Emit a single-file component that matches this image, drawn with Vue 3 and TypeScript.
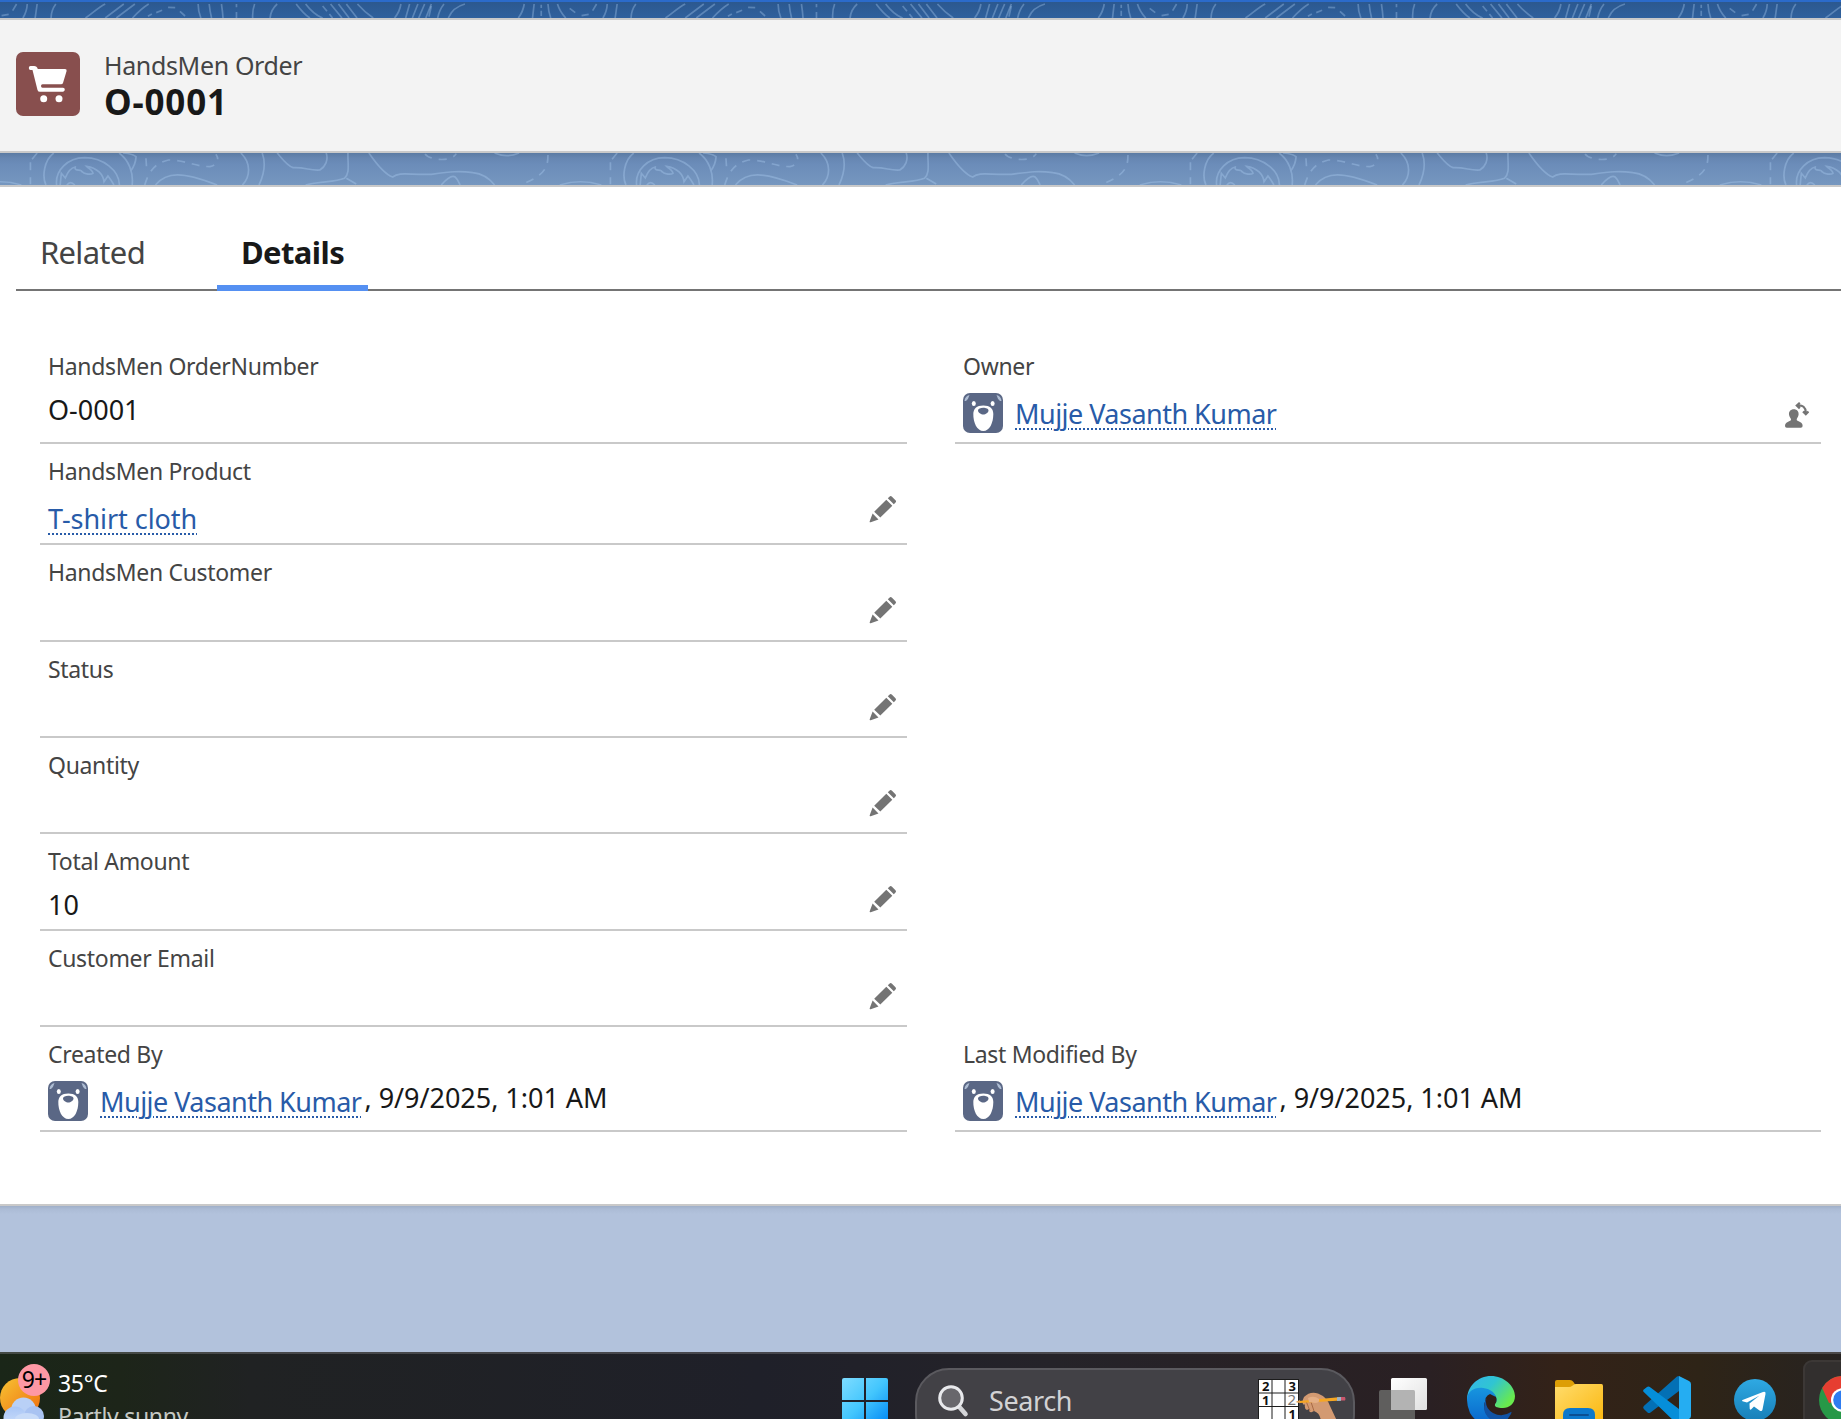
<script setup lang="ts">
interface Field {
  label: string
  value?: string
  link?: string
  avatar?: boolean
  action?: 'edit' | 'owner'
  side?: 'right'
}

const fields: Field[] = [
  { label: 'HandsMen OrderNumber', value: 'O-0001' },
  { label: 'Owner', link: 'Mujje Vasanth Kumar', avatar: true, action: 'owner', side: 'right' },
  { label: 'HandsMen Product', link: 'T-shirt cloth', action: 'edit' },
  { label: 'HandsMen Customer', action: 'edit' },
  { label: 'Status', action: 'edit' },
  { label: 'Quantity', action: 'edit' },
  { label: 'Total Amount', value: '10', action: 'edit' },
  { label: 'Customer Email', action: 'edit' },
  { label: 'Created By', link: 'Mujje Vasanth Kumar', avatar: true, value: ', 9/9/2025, 1:01 AM' },
  { label: 'Last Modified By', link: 'Mujje Vasanth Kumar', avatar: true, value: ', 9/9/2025, 1:01 AM', side: 'right' },
]

/* The contour artwork repeats every 580px. */
const tiles: number[] = [-540, 40, 620, 1200, 1780]
</script>

<template>
  <div class="page">
    <div class="band band-top">
      <svg width="1841" height="16" viewBox="0 2 1841 16">
        <g v-for="x in tiles" :key="x" :transform="`translate(${x} 0) scale(.3953 .3333)`" class="contour">
          <path d="M40 12C32 25 28 40 28 54M165 12C148 22 130 42 115 54M212 12L165 54M240 12L193 54M275 12C258 24 245 40 234 54M400 12Q400 35 407 54M428 12Q430 35 434 54M459 12Q462 35 463 54M543 12Q537 30 538 54M600 12C588 25 583 40 582 54M648 12C662 34 670 45 683 54M672 12C686 34 698 46 715 54M735 12L764 54M755 12L782 54M775 12L802 54M803 12Q820 35 843 54M913 12Q910 35 897 54M935 12L925 54M956 12L942 54M973 12L958 54M990 12L976 54M1022 12Q1010 30 1006 54M1075 12C1050 20 1038 40 1033 54M1225 12Q1222 35 1210 54M1250 12L1246 54M1285 12Q1286 35 1292 54M1309 12Q1315 35 1330 54M1435 12Q1434 35 1424 54M1460 12L1455 54" />
          <path d="M273 49L283 42M294 38L309 31M324 22L342 23M354 34L367 48M497 12V22M497 36V54M715 18L726 34M732 42L740 54M990 18L984 50M1268 14V24M1268 32V48M1340 25L1354 38M1370 47L1388 43M1398 32L1408 12" />
        </g>
      </svg>
    </div>

    <header class="record-header">
      <svg class="record-icon" viewBox="0 0 64 64">
        <rect width="64" height="64" rx="7" fill="#884f4e" />
        <path d="M14.500 14H18q3 0 3.800 3H49q2 0 1.600 2L47 31q-.5 1.300-2 1.300H26.500q-1.500 0-1.500 1.700t1.500 1.700H47q1.800 0 1.800 1.900T47 39.800H24q-2 0-2.500-1.900L16.500 18H14.500q-1.700 0-1.700-2t1.700-2Z" fill="#fff" />
        <circle cx="27.700" cy="46.800" r="3.500" fill="#fff" /><circle cx="43" cy="46.800" r="3.500" fill="#fff" />
      </svg>
      <div class="record-name">
        <div class="object-name">HandsMen Order</div>
        <h1>O-0001</h1>
      </div>
    </header>

    <div class="band band-mid">
      <svg width="1841" height="32" viewBox="0 153 1841 32">
        <g v-for="x in tiles" :key="x" :transform="`translate(${x} 0) scale(.3953 .3333)`" class="contour">
          <path d="M35 459C10 480 5 530 15 555M200 459C225 480 237 520 233 555M210 459Q235 462 243 470Q242 493 230 512M42 555C38 510 70 474 113 473C160 474 200 510 201 555M51 555L54 520L64 534C72 510 80 503 89 501C86 516 104 506 106 515C113 524 130 524 134 520C134 512 124 506 118 499C145 503 160 525 162 545L172 528Q180 540 187 555M68 555Q77 541 88 555M292 555C320 515 360 514 448 555M508 459C535 490 532 530 512 555M562 459C572 490 568 520 554 555M600 459C615 480 625 497 640 503C670 501 685 513 708 510C722 500 730 480 724 459M779 459C778 490 785 520 770 535C745 548 710 543 672 555M775 535L800 552M832 459C850 490 870 522 892 531C910 515 930 525 990 523C1040 515 1060 512 1095 518C1125 522 1140 540 1150 555M1150 459Q1180 475 1212 459M1015 555C1030 535 1042 525 1050 531C1058 540 1060 550 1063 555M1315 555C1350 542 1385 542 1420 555" />
          <path class="dashed" d="M268 475L270 510M265 555C275 515 290 490 325 480C370 480 390 500 430 500C448 495 455 480 445 463M974 462C985 480 1040 488 1053 461M1285 465C1285 500 1280 525 1215 555M1460 459L1447 478M1443 487V553" />
        </g>
      </svg>
    </div>

    <main class="card">
      <nav class="tabs">
        <a class="tab">Related</a>
        <a class="tab active">Details</a>
      </nav>
      <section class="fields">
        <div v-for="f in fields" :key="f.label" class="field" :class="{ right: f.side === 'right' }">
          <div class="label">{{ f.label }}</div>
          <div class="content">
            <svg v-if="f.avatar" class="avatar" viewBox="0 0 40 40">
              <rect width="40" height="40" rx="7" fill="#5a6785" />
              <path d="M1.500 8Q2 3 6.500 2Q5.500 6 3 8ZM38.500 8Q38 3 33.500 2Q34.500 6 37 8Z" fill="#aebdd3" />
              <ellipse cx="10.800" cy="10.500" rx="2" ry="2.600" fill="#fff" /><ellipse cx="29.600" cy="10.500" rx="2" ry="2.600" fill="#fff" />
              <path d="M20.300 12.400C27 12.400 30.300 15.500 30.300 21C30.300 30 26.500 38 20.300 38S10.300 30 10.300 21C10.300 15.500 13.600 12.400 20.300 12.400Z" fill="#fff" />
              <path d="M15 17.500C15 13.700 25.500 13.700 25.500 17.500C25.500 19.500 22.500 21.500 20.300 21.500S15 19.500 15 17.500Z" fill="#5a6785" />
            </svg>
            <a v-if="f.link" class="link">{{ f.link }}</a>
            <span v-if="f.value" class="value">{{ f.value }}</span>
          </div>
          <svg v-if="f.action === 'edit'" class="pencil" viewBox="0 0 28 28">
            <path d="M20.400 1.700Q21.700.400 23 1.700L26.500 5.200Q27.600 6.400 26.500 7.500L24.800 9.300L18.800 3.300ZM17.300 4.800L23.300 10.800L11.300 22.600L5.200 16.700ZM3.600 18.600L9.500 24.500L1.700 27.300Q.300 27.500.700 26.200Z" fill="#747474" />
          </svg>
          <svg v-if="f.action === 'owner'" class="owner-icon" viewBox="0 0 24 26">
            <path d="M8.800 7.300C12 7.300 13.800 9.500 13.600 12.500C13.400 15 12 16 11.700 17.200C11.500 18.600 13 19 15 19.900C17 20.800 17.700 22 17.600 24Q17.600 25.800 15.800 25.800H1.800Q0 25.800 0 24C0 22 .700 20.800 2.700 19.900C4.700 19 6.200 18.600 6 17.200C5.700 16 4.200 15 4 12.500C3.800 9.500 5.700 7.300 8.800 7.300Z" fill="#747474" />
            <path d="M12.200 3.400Q20.600 2.600 20.800 10.500M14.800 .800L11.800 3.500L14.800 6.400M18 9.500L20.800 12.200L23.500 9.500" fill="none" stroke="#747474" stroke-width="2.200" />
          </svg>
        </div>
      </section>
    </main>

    <div class="backdrop"></div>

    <footer class="taskbar">
      <div class="weather">
        <svg class="weather-icon" width="46" height="48" viewBox="0 1372 46 48">
          <defs>
            <linearGradient id="sun" x1="0" y1="0" x2="1" y2="1"><stop offset="0" stop-color="#f7c433" /><stop offset="1" stop-color="#ee6a0e" /></linearGradient>
            <linearGradient id="cloud" x1="0" y1="0" x2="0" y2="1"><stop offset="0" stop-color="#a9c6f6" /><stop offset="1" stop-color="#d3e2fa" /></linearGradient>
          </defs>
          <circle cx="20" cy="1398" r="20" fill="url(#sun)" />
          <circle cx="23.500" cy="1410" r="12.500" fill="#b9d0f6" />
          <circle cx="34" cy="1416" r="10" fill="#a9c3f2" />
          <circle cx="15" cy="1418" r="11.500" fill="url(#cloud)" />
          <ellipse cx="27" cy="1419" rx="12" ry="6" fill="#c8dbf8" />
        </svg>
        <span class="badge">9+</span>
        <div class="weather-text">
          <div>35°C</div>
          <div class="dim">Partly sunny</div>
        </div>
      </div>

      <svg class="start" width="46" height="46" viewBox="0 0 46 46">
        <defs><linearGradient id="win" gradientUnits="userSpaceOnUse" x1="0" y1="0" x2="46" y2="46"><stop offset="0" stop-color="#7edcff" /><stop offset=".5" stop-color="#43c6fd" /><stop offset="1" stop-color="#0087f5" /></linearGradient></defs>
        <path d="M2 0H22V22H0V2Q0 0 2 0ZM24 0H44Q46 0 46 2V22H24ZM0 24H22V46H0ZM24 24H46V46H24Z" fill="url(#win)" />
      </svg>

      <div class="search">
        <svg width="32" height="34" viewBox="0 0 32 34">
          <path d="M21.500 22L28.500 30" stroke="#d4d5d8" stroke-width="4.600" stroke-linecap="round" />
          <circle cx="14" cy="14" r="11.300" fill="#68676c" stroke="#e8e9ec" stroke-width="3" />
        </svg>
        <span class="search-text">Search</span>
        <svg class="doodle" width="90" height="42" viewBox="0 0 90 42">
          <rect x=".5" y=".5" width="40" height="44" fill="#fff" stroke="#1c1c1c" />
          <path d="M14 0V42M27 0V42M0 14H41M0 27.500H41" stroke="#1c1c1c" />
          <g class="digits"><text x="4" y="12">2</text><text x="30.500" y="12">3</text><text x="4" y="26">1</text><text x="30.500" y="39.500">1</text><text x="29.500" y="26" class="sketched">2</text></g>
          <path d="M46 18Q52 12 60 14.500Q69 18 72 27L79 42H63Q62 34 56 32L54 33Q51 34 51 30L49 31Q46 30 47 25L46 26Q43 24 46 18Z" fill="#d39a72" />
          <path d="M48 22L52 32M53 23L56 32" stroke="#a86a45" stroke-width="1" />
          <path d="M41 22L83 18V21.500L42 24Z" fill="#f5a623" /><path d="M37.500 23L42 21V24.300Z" fill="#e0a050" /><path d="M79 18.300L83 18V21.800L79 22Z" fill="#9bb4c9" /><path d="M83 18H87Q88 20 87 21.600H83Z" fill="#c8566b" />
          <path d="M50 19Q56 16 61 20Q62 24 57 24L51 23Z" fill="#e4af86" />
        </svg>
      </div>

      <div class="apps">
        <svg class="app" viewBox="0 0 48 48">
          <defs><linearGradient id="tvw" x1="0" y1="0" x2="1" y2="1"><stop offset="0" stop-color="#fff" /><stop offset="1" stop-color="#e0e0e0" /></linearGradient></defs>
          <rect x="0" y="14" width="36" height="34" rx="2" fill="#5f5e5d" />
          <rect x="12" y="2" width="36" height="32" rx="1.500" fill="url(#tvw)" />
          <path d="M12 14H34.500Q36 14 36 15.500V34H13.500Q12 34 12 32.500Z" fill="#b3b3b3" />
        </svg>
        <svg class="app" viewBox="0 0 48 48">
          <defs>
            <linearGradient id="edgeTop" x1="0" y1="0" x2="1" y2=".6"><stop offset="0" stop-color="#35b4ec" /><stop offset=".5" stop-color="#30c5d2" /><stop offset="1" stop-color="#69ea4d" /></linearGradient>
            <linearGradient id="edgeBlue" x1="0" y1="0" x2="0" y2="1"><stop offset="0" stop-color="#1795df" /><stop offset="1" stop-color="#0a66cc" /></linearGradient>
          </defs>
          <path d="M0 24C0 10 11 0 24 0S48 10 48 20C48 28 42 32 36 32C30 32 27 31 28 28C31 25 30 20 25 17L15 12Z" fill="url(#edgeTop)" />
          <path d="M0 24C0 15 8 11 16 12C25 13 31 19 29 26Q27 19 22 20C14 26 16 40 28 46Q12 52 3 37Q0 30 0 24Z" fill="url(#edgeBlue)" />
          <path d="M23 18Q17 20 19 28Q21 36 29 38Q34 38 38 37L32 32Q26 31 28 28Q30 24 29 21Z" fill="#301f19" />
          <path d="M19.500 22Q17 32 26 37T44 36Q45 35 44 38L40 44Q34 47 28 46Q12 38 19.500 22Z" fill="#1153a5" />
        </svg>
        <svg class="app" viewBox="0 0 48 48">
          <defs><linearGradient id="fold" x1="0" y1="0" x2="1" y2="1"><stop offset="0" stop-color="#ffdc6c" /><stop offset="1" stop-color="#fbb60c" /></linearGradient></defs>
          <path d="M0 6Q0 4 2 4H15Q17 4 18.500 6L21 10L14 16H0Z" fill="#dd9e05" />
          <path d="M0 11H14Q16 11 17 10L18.500 9Q19.500 8 21 8H46.500Q48 8 48 10V48H0Z" fill="url(#fold)" />
          <path d="M8 48V39Q8 32 15 32H33Q40 32 40 39V48Z" fill="#0c78cc" /><path d="M15 39H33" stroke="#0b4f92" stroke-width="2" stroke-linecap="round" />
        </svg>
        <svg class="app" viewBox="0 0 48 48">
          <path d="M34 .500L36 0V15L7.500 36.500Q6 37.500 4.500 36.500L.800 33Q-.500 31.500 .800 30Z" fill="#0370b5" />
          <path d="M.800 16Q-.500 14.500 .800 13.500L4 11Q5.500 10 7.500 11.500L36 33V48H34Z" fill="#058ed9" />
          <path d="M36 0L46 5Q48 6 48 8V40Q48 42 46 43L36 48Z" fill="#25adf2" />
        </svg>
        <svg class="app" viewBox="0 0 48 48">
          <defs><linearGradient id="tg" x1="0" y1="0" x2="0" y2="1"><stop offset="0" stop-color="#2fa9e3" /><stop offset="1" stop-color="#177fb8" /></linearGradient></defs>
          <circle cx="24" cy="24" r="21" fill="url(#tg)" />
          <path d="M11.500 24L32 16Q35 15 34.500 18L31.500 33.500Q31 36 28.500 34.500L23 30.500L20 33.500Q18.700 34 18.700 32.500L18.500 27.500L28.500 19.500L16 26.500L11.500 25.300Q10.500 24.700 11.500 24Z" fill="#fff" />
        </svg>
      </div>
      <div class="chrome-tile">
        <svg width="48" height="48" viewBox="0 0 48 48">
          <circle cx="24" cy="24" r="24" fill="#279847" />
          <path d="M3.200 12A24 24 0 0 1 44.800 12L24 24L10 27Z" fill="#e63e31" />
          <circle cx="24" cy="24" r="12" fill="#fff" /><circle cx="24" cy="24" r="9.800" fill="#2e7cf0" />
        </svg>
      </div>
    </footer>
  </div>
</template>

<style>
body {
  margin: 0;
  overflow: hidden;
}
</style>

<style scoped>
.page {
  width: 1841px;
  height: 1419px;
  overflow: hidden;
  display: flex;
  flex-direction: column;
  background: #b2c2dc;
  font-family: "Noto Sans", "Open Sans", sans-serif;
  color: #181818;
}
.page * {
  box-sizing: border-box;
}
svg {
  display: block;
  flex: none;
}
.band {
  flex: none;
  overflow: hidden;
}
.band-top {
  height: 18px;
  border-top: 2px solid #2b6bcb;
  background: linear-gradient(#2c588f, #2f609d);
}
.band-mid {
  height: 32px;
  background: linear-gradient(#5b7ba3 0, #6686b1 5px, #6b8cb9 11px, #7697bf 32px);
}
.contour path {
  fill: none;
  stroke: rgba(180, 210, 245, 0.34);
  stroke-width: 1.700px;
  vector-effect: non-scaling-stroke;
}
.contour .dashed {
  stroke-dasharray: 8 7;
}
.record-header {
  flex: none;
  height: 135px;
  border-top: 2px solid #c9c9c9;
  border-bottom: 2px solid #c9c9c9;
  background: #f3f3f3;
  display: flex;
  padding: 32px 16px 0;
}
.record-icon {
  width: 64px;
  height: 64px;
}
.record-name {
  margin-left: 24px;
}
.object-name {
  margin-top: -1px;
  font-size: 25px;
  line-height: 28px;
  letter-spacing: -0.35px;
  color: #444;
}
h1 {
  margin: 5px 0 0;
  font-size: 35px;
  line-height: 36px;
  font-weight: 700;
  letter-spacing: 0.8px;
}
.card {
  flex: none;
  height: 1021px;
  border-top: 2px solid #c9c9c9;
  border-bottom: 2px solid #c9c9c9;
  background: #fff;
}
.tabs {
  display: flex;
  gap: 48px;
  height: 88px;
  margin: 16px 0 0 16px;
  border-bottom: 2px solid #747474;
}
.tab {
  height: 88px;
  padding: 0 24px;
  font-size: 31px;
  line-height: 98px;
  letter-spacing: -0.7px;
  color: #444;
}
.tab.active {
  font-weight: 700;
  color: #181818;
  border-bottom: 6px solid #5590f2;
  letter-spacing: -0.6px;
}
.fields {
  display: grid;
  grid-template-columns: 867px 866px;
  grid-template-rows: 105px 101px 97px 96px 96px 97px 96px 105px;
  column-gap: 48px;
  margin: 48px 0 0 40px;
}
.field {
  grid-column: 1;
  position: relative;
  border-bottom: 2px solid #c9c9c9;
  padding: 9px 8px 0;
}
.field.right {
  grid-column: 2;
}
.label {
  font-size: 23px;
  line-height: 36px;
  letter-spacing: -0.32px;
  color: #444;
}
.content {
  display: flex;
  height: 49px;
  font-size: 27px;
  line-height: 40px;
  white-space: pre;
}
.avatar {
  width: 40px;
  height: 40px;
  margin: 9px 12px 0 0;
}
.link {
  margin-top: 10px;
  height: 40px;
  color: #285ba8;
  letter-spacing: -0.05px;
  text-decoration: underline dotted 2px;
  text-underline-offset: 4px;
}
.avatar + .link {
  letter-spacing: -0.52px;
}
.value {
  margin-top: 6px;
}
.link + .value {
  margin-left: 3px;
  letter-spacing: -0.03px;
}
.pencil {
  position: absolute;
  right: 10px;
  top: 51px;
  width: 28px;
  height: 28px;
}
.owner-icon {
  position: absolute;
  right: 12px;
  top: 63px;
  width: 24px;
  height: 26px;
}
.backdrop {
  flex: none;
  height: 146px;
  background: linear-gradient(#9fafc8 0, #abbbd5 3px, #b2c2dc 8px, #b2c2dc 100%);
}
.taskbar {
  flex: none;
  height: 67px;
  display: flex;
  overflow: hidden;
  border-top: 2px solid rgba(120, 120, 125, 0.45);
  background: linear-gradient(90deg, #1a2618 0, #1d2519 120px, #202223 250px, #1f2029 760px, #252329 1050px, #2a2023 1430px, #332218 1560px, #2e2417 1700px, #272321 1841px);
}
.weather {
  position: relative;
  flex: none;
  display: flex;
  width: 842px;
}
.weather-icon {
  margin-top: 18px;
}
.badge {
  position: absolute;
  left: 18px;
  top: 10px;
  width: 32px;
  height: 32px;
  border-radius: 50%;
  background: #fe98a4;
  color: #000;
  font-size: 23px;
  line-height: 31px;
  text-align: center;
  letter-spacing: -1px;
}
.weather-text {
  margin: 13px 0 0 12px;
  font-size: 23px;
  line-height: 33px;
  letter-spacing: -0.3px;
  color: #fff;
}
.dim {
  color: #c4c8c3;
}
.start {
  margin-top: 24px;
}
.search {
  flex: none;
  display: flex;
  width: 440px;
  height: 80px;
  margin: 14px 0 0 27px;
  padding-left: 20px;
  border: 2px solid #5b5a5f;
  border-radius: 34px;
  background: #424146;
}
.search > svg:first-child {
  margin-top: 14px;
}
.search-text {
  margin-left: 20px;
  width: 269px;
  font-size: 27px;
  line-height: 62px;
  letter-spacing: -0.4px;
  color: #d2d2d4;
}
.doodle {
  margin-top: 9px;
}
.digits {
  font: 700 13px "Noto Sans", sans-serif;
  fill: #111;
}
.digits .sketched {
  font-weight: 400;
  font-size: 15px;
  fill: #777;
}
.apps {
  flex: none;
  display: flex;
  gap: 40px;
  margin: 22px 0 0 24px;
}
.app {
  width: 48px;
  height: 48px;
  overflow: visible;
}
.chrome-tile {
  flex: none;
  width: 80px;
  height: 80px;
  margin: 6px 0 0 24px;
  padding: 14px 0 0 14px;
  border: 2px solid #3c3836;
  border-radius: 9px;
  background: #322f2e;
}
</style>
